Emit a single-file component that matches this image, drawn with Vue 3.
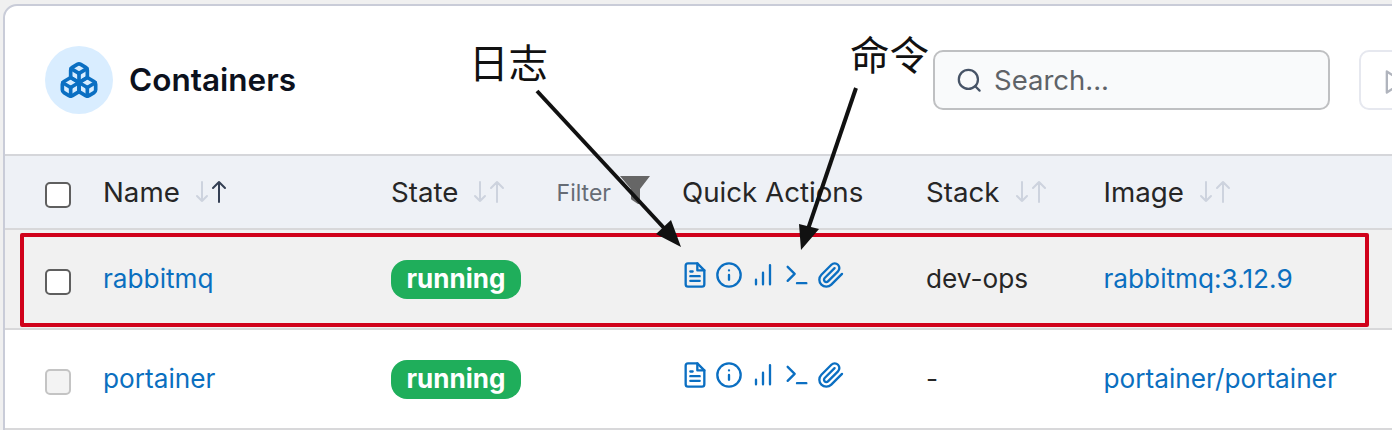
<script setup>
const rows = [
  { name: 'rabbitmq', stack: 'dev-ops', image: 'rabbitmq:3.12.9', hl: true },
  { name: 'portainer', stack: '-', image: 'portainer/portainer', hl: false },
]
const marks = []
for (const y of [208, 466]) {
  for (const x of [-80, 358, 792, 1226]) marks.push({ x, y })
}
const wm = m => ({ left: m.x + 'px', top: m.y + 'px' })
</script>

<template>
  <div class="page">
    <div class="card">
      <header class="head">
        <div class="circle">
          <svg class="boxes" viewBox="0 0 24 24" fill="none" stroke="currentColor" stroke-width="2.2" stroke-linecap="round" stroke-linejoin="round">
            <path d="M2.97 12.92A2 2 0 0 0 2 14.63v3.24a2 2 0 0 0 .97 1.71l3 1.8a2 2 0 0 0 2.06 0L12 19v-5.5l-5-3-4.03 2.42Z"/>
            <path d="m7 16.5-4.74-2.85"/><path d="m7 16.5 5-3"/><path d="M7 16.5v5.17"/>
            <path d="M12 13.5V19l3.97 2.38a2 2 0 0 0 2.06 0l3-1.8a2 2 0 0 0 .97-1.71v-3.24a2 2 0 0 0-.97-1.71L17 10.5l-5 3Z"/>
            <path d="m17 16.5-5-3"/><path d="m17 16.5 4.74-2.85"/><path d="M17 16.5v5.17"/>
            <path d="M7.97 4.42A2 2 0 0 0 7 6.13v4.37l5 3 5-3V6.13a2 2 0 0 0-.97-1.71l-3-1.8a2 2 0 0 0-2.06 0l-3 1.8Z"/>
            <path d="M12 8 7.26 5.15"/><path d="m12 8 4.74-2.85"/><path d="M12 13.5V8"/>
          </svg>
        </div>
        <h1 class="title">Containers</h1>
        <div class="search">
          <svg class="search-ic" viewBox="0 0 24 24" fill="none" stroke="currentColor" stroke-width="2" stroke-linecap="round">
            <circle cx="11" cy="11" r="8.5"/><path d="m21 21-3.9-3.9"/>
          </svg>
          <span>Search...</span>
        </div>
        <div class="btn">
          <svg class="play" viewBox="0 0 24 24" fill="none" stroke="currentColor" stroke-width="2" stroke-linejoin="round">
            <path d="M5 3l14 9-14 9V3z"/>
          </svg>
        </div>
      </header>

      <div class="grid thead">
        <div class="cell"><span class="check"></span></div>
        <div class="cell">Name
          <svg class="sort" viewBox="0 0 32 24" fill="none" stroke-width="2" stroke-linecap="round" stroke-linejoin="round">
            <path stroke="#cdd3de" d="M7 2v19M2 16l5 5 5-5"/>
            <path stroke="#344054" d="M24 22V2M18 8l6-6 6 6"/>
          </svg>
        </div>
        <div class="cell state">State
          <svg class="sort" viewBox="0 0 32 24" fill="none" stroke-width="2" stroke-linecap="round" stroke-linejoin="round">
            <path stroke="#cdd3de" d="M7 2v19M2 16l5 5 5-5M24 22V2M18 8l6-6 6 6"/>
          </svg>
          <span class="filter"><span class="filter-label">Filter</span>
            <svg class="funnel" viewBox="0 0 30 28"><path fill="#666" d="M0 0h30L20 13v14c0 1-1 1-2 1l-6-4c-1-.6-1-1-1-2v-9z"/></svg>
          </span>
        </div>
        <div class="cell">Quick Actions</div>
        <div class="cell">Stack
          <svg class="sort" viewBox="0 0 32 24" fill="none" stroke-width="2" stroke-linecap="round" stroke-linejoin="round">
            <path stroke="#cdd3de" d="M7 2v19M2 16l5 5 5-5M24 22V2M18 8l6-6 6 6"/>
          </svg>
        </div>
        <div class="cell">Image
          <svg class="sort" viewBox="0 0 32 24" fill="none" stroke-width="2" stroke-linecap="round" stroke-linejoin="round">
            <path stroke="#cdd3de" d="M7 2v19M2 16l5 5 5-5M24 22V2M18 8l6-6 6 6"/>
          </svg>
        </div>
      </div>

      <div v-for="r in rows" :key="r.name" class="grid row" :class="{ hl: r.hl }">
        <div class="cell"><span class="check" :class="{ off: !r.hl }"></span></div>
        <div class="cell link">{{ r.name }}</div>
        <div class="cell"><span class="badge">running</span></div>
        <div class="cell">
          <div class="actions">
            <svg viewBox="0 0 24 24"><path d="M14 2H6a2 2 0 0 0-2 2v16a2 2 0 0 0 2 2h12a2 2 0 0 0 2-2V8z"/><path d="M14 2v6h6M16 13H8M16 17H8M10 9H8"/></svg>
            <svg viewBox="0 0 24 24"><circle cx="12" cy="12" r="10"/><path d="M12 16v-4M12 8h.01"/></svg>
            <svg viewBox="0 0 24 24"><path d="M6 20v-4M12 20V10M18 20V3.5"/></svg>
            <svg viewBox="0 0 24 24"><path d="M4 17l6-6-6-6M12 19h8"/></svg>
            <svg viewBox="0 0 24 24"><path d="m21.44 11.05-9.19 9.19a6 6 0 0 1-8.49-8.49l8.57-8.57A4 4 0 1 1 18 8.84l-8.59 8.57a2 2 0 0 1-2.83-2.83l8.49-8.48"/></svg>
          </div>
        </div>
        <div class="cell text">{{ r.stack }}</div>
        <div class="cell link">{{ r.image }}</div>
      </div>
    </div>

    <div class="marks">
      <span v-for="(m, i) in marks" :key="i" class="mark" :style="wm(m)">fuzhengwei3-701309</span>
    </div>

    <div class="redbox"></div>
    <span class="note n1">日志</span>
    <span class="note n2">命令</span>
    <svg class="arrows" viewBox="0 0 1392 430">
      <g stroke="#111" stroke-width="4" fill="#111">
        <path d="M537 91 664 228" fill="none"/>
        <path d="M856 88 807 232" fill="none"/>
      </g>
      <path fill="#111" d="M681 247 656 234 671 220zM801 250 799 224 819 229z"/>
    </svg>
  </div>
</template>

<style>
html, body { margin: 0; overflow: hidden; background: #f0f0f0; }
</style>

<style scoped>
.page {
  position: relative;
  width: 1392px;
  height: 430px;
  overflow: hidden;
  padding-top: 4px;
  box-sizing: border-box;
  background: #f0f0f0;
  font-family: Inter, "Noto Sans CJK SC", sans-serif;
  font-size: 26px;
  color: #262626;
}
.card {
  width: 1420px;
  margin-left: 3px;
  height: 440px;
  box-sizing: border-box;
  background: #fff;
  border: 2px solid #c9ccd8;
  border-radius: 14px;
}
.head {
  height: 150px;
  box-sizing: border-box;
  border-bottom: 2px solid #d5d6da;
  display: flex;
  align-items: center;
  padding-left: 40px;
}
.circle {
  width: 68px;
  height: 68px;
  flex: none;
  border-radius: 50%;
  background: #d9edff;
  color: #0b6fc2;
  display: flex;
  align-items: center;
  justify-content: center;
}
.boxes { width: 40px; height: 40px; }
.title {
  margin: 0 0 2px 16px;
  width: 804px;
  flex: none;
  font-size: 31.5px;
  font-weight: 600;
  color: #0c111d;
}
.search {
  width: 397px;
  height: 60px;
  flex: none;
  box-sizing: border-box;
  background: #f9fafb;
  border: 2px solid #bfc0c2;
  border-radius: 10px;
  display: flex;
  align-items: center;
  padding-left: 21px;
  gap: 11px;
  font-size: 27.5px;
  color: #5f6368;
}
.search-ic { width: 27px; height: 27px; color: #475467; }
.btn {
  width: 120px;
  height: 60px;
  flex: none;
  box-sizing: border-box;
  margin-left: 29px;
  border: 2px solid #e6e8ef;
  border-radius: 10px;
  padding: 16px 0 0 20px;
}
.play { width: 28px; height: 28px; color: #b0b4bd; display: block; }

.grid {
  display: grid;
  grid-template-columns: 98px 288px 291px 244px 177.5px 1fr;
  align-items: center;
  box-sizing: border-box;
}
.thead { height: 74px; background: #eef1f6; border-bottom: 2px solid #d8d8da; font-size: 27.7px; }
.row { height: 100px; background: #fff; border-bottom: 2px solid #d8d8da; font-size: 26.2px; }
.row.hl { background: #f1f1f1; }
.cell { display: flex; align-items: center; white-space: nowrap; }
.cell:first-child { padding-left: 40px; }
.check {
  width: 26px;
  height: 26px;
  box-sizing: border-box;
  background: #fff;
  border: 2px solid #5f5f5f;
  border-radius: 5px;
  margin-top: 6px;
}
.check.off { background: #f3f3f3; border-color: #c4c4c4; }
.sort { width: 32px; height: 24px; margin-left: 15px; }
.state { padding-right: 32px; }
.filter {
  margin-left: auto;
  display: flex;
  align-items: center;
  gap: 9px;
  font-size: 23px;
  color: #666c75;
}
.filter-label { margin-top: 2px; }
.funnel { width: 30px; height: 28px; margin-top: -4px; }
.link, .text { margin-bottom: 2px; }
.link { color: #0b6fbf; }
.badge {
  background: #1fae5b;
  color: #fff;
  font-size: 26px;
  font-weight: 700;
  height: 39px;
  line-height: 37px;
  padding: 0 15.5px;
  border-radius: 16px;
}
.actions { display: flex; gap: 6px; margin-bottom: 8px; margin-left: -1px; }
.actions svg {
  width: 28px;
  height: 28px;
  fill: none;
  stroke: #0b6fc2;
  stroke-width: 2;
  stroke-linecap: round;
  stroke-linejoin: round;
}
.marks { position: absolute; inset: 0; pointer-events: none; overflow: hidden; }
.mark {
  position: absolute;
  transform-origin: 0 0;
  transform: rotate(-21deg);
  font-size: 26px;
  letter-spacing: 1.5px;
  white-space: nowrap;
  color: rgba(60, 60, 80, 0.022);
}
.redbox {
  position: absolute;
  left: 20px;
  top: 233px;
  width: 1349px;
  height: 94px;
  box-sizing: border-box;
  border: 4px solid #d0021b;
  border-radius: 2px;
}
.note {
  position: absolute;
  font-family: "Noto Sans CJK SC", sans-serif;
  font-size: 39.5px;
  line-height: 44px;
  color: #111;
}
.n1 { left: 469px; top: 39px; }
.n2 { left: 850px; top: 31px; }
.arrows { position: absolute; inset: 0; width: 1392px; height: 430px; pointer-events: none; }
</style>
